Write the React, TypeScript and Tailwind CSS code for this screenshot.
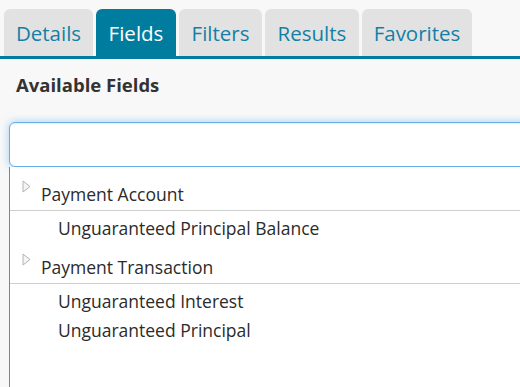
const tabs = [
  { label: "Details", w: "w-[89px]" },
  { label: "Fields", w: "w-[80px]", active: true },
  { label: "Filters", w: "w-[83px]" },
  { label: "Results", w: "w-[94px]" },
  { label: "Favorites", w: "w-[110px]" },
];

type Group = { name: string; children: string[] };

const groups: Group[] = [
  { name: "Payment Account", children: ["Unguaranteed Principal Balance"] },
  {
    name: "Payment Transaction",
    children: ["Unguaranteed Interest", "Unguaranteed Principal"],
  },
];

function Caret() {
  return (
    <svg width="9" height="13" viewBox="0 0 9 13" className="shrink-0">
      <polygon
        points="1,1 8,6.5 1,12"
        fill="#f4f4f4"
        stroke="#b3b3b3"
        strokeWidth="1"
        strokeLinejoin="round"
      />
    </svg>
  );
}

export default function App() {
  return (
    <div className="flex h-[387px] w-[520px] flex-col overflow-hidden bg-[#f8f8f8] font-['Open_Sans',sans-serif] text-[#2b2b2b]">
      <nav className="flex gap-[3px] border-b-[3px] border-[#007c9f] pl-[4px] pt-[9px]">
        {tabs.map((t) => (
          <div
            key={t.label}
            className={`flex h-[47px] ${t.w} items-center justify-center rounded-t-[6px] pt-[2px] text-[20.5px] ${
              t.active ? "bg-[#007c9f] text-white" : "bg-[#e2e2e2] text-[#137fa6]"
            }`}
          >
            {t.label}
          </div>
        ))}
      </nav>

      <h2 className="pl-[16px] pt-[13px] text-[18.5px] font-bold leading-[26px] text-[#333]">
        Available Fields
      </h2>

      <input
        className="ml-[9px] mt-[24px] h-[45px] w-[540px] shrink-0 rounded-[6px] border border-[#66afe9] bg-white px-3 outline-none shadow-[inset_0_1px_1px_rgba(0,0,0,0.075),0_0_8px_rgba(102,175,233,0.6)]"
        defaultValue=""
      />

      <div className="ml-[9px] flex-1 border-l border-[#3a9ccc] bg-white text-[17.5px]">
        {groups.map((g) => (
          <div key={g.name}>
            <div className="flex h-[44px] gap-[10px] border-b border-[#cfcfcf] pl-[12px]">
              <div className="pt-[13px]">
                <Caret />
              </div>
              <span className="pt-[14px] leading-[26px]">{g.name}</span>
            </div>
            {g.children.map((c) => (
              <div key={c} className="h-[29px] pl-[48px] pt-[4px] leading-[26px]">
                {c}
              </div>
            ))}
          </div>
        ))}
      </div>
    </div>
  );
}
